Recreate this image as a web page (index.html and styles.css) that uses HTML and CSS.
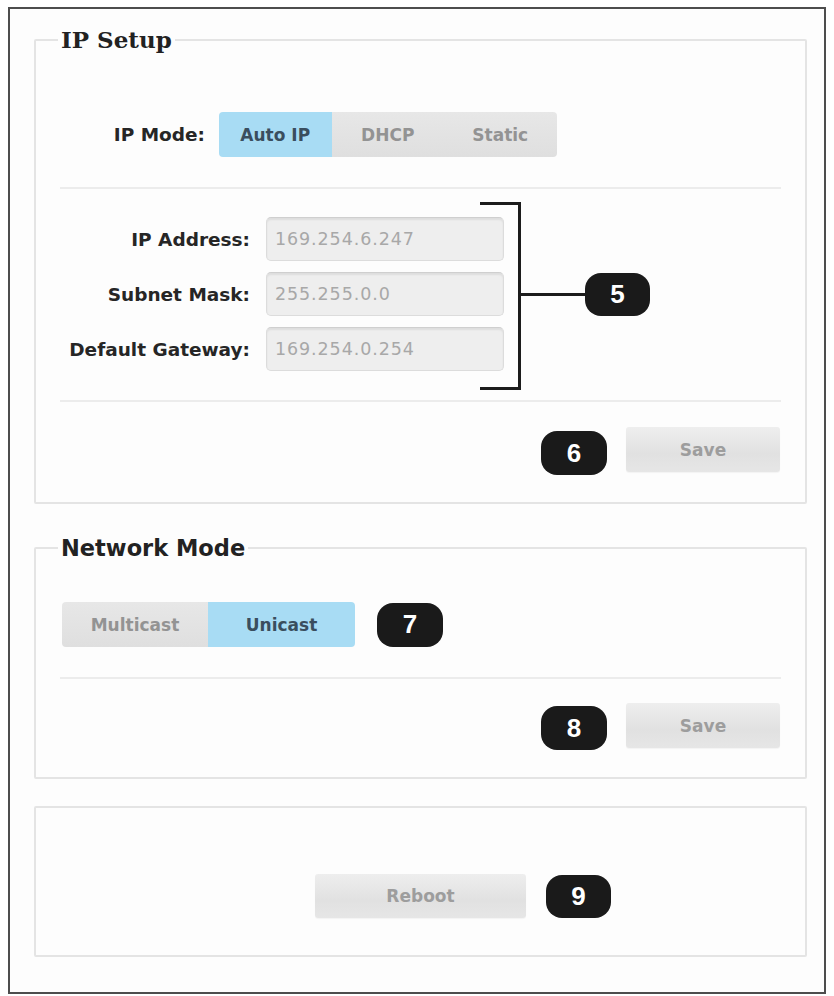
FILE: index.html
```html
<!DOCTYPE html>
<html lang="en">
<head>
<meta charset="utf-8">
<title>Network Settings</title>
<link rel="stylesheet" href="styles.css">
</head>
<body>
<div class="frame">

  <fieldset class="panel">
    <legend class="legend legend-serif">IP Setup</legend>
    <div class="mode-row mode-row-ip">
      <span class="mode-label">IP Mode:</span>
      <div class="segmented">
        <button class="seg seg-ip active">Auto IP</button>
        <button class="seg seg-ip">DHCP</button>
        <button class="seg seg-ip">Static</button>
      </div>
    </div>
    <div class="rule rule-after-mode"></div>
    <div class="address-block">
      <div class="fields">
        <label class="field-label">IP Address:</label>
        <input class="field-input" value="169.254.6.247" readonly>
        <label class="field-label">Subnet Mask:</label>
        <input class="field-input" value="255.255.0.0" readonly>
        <label class="field-label">Default Gateway:</label>
        <input class="field-input" value="169.254.0.254" readonly>
      </div>
      <div class="bracket"></div>
      <div class="connector"></div>
      <span class="badge">5</span>
    </div>
    <div class="rule"></div>
    <div class="action-row">
      <span class="badge badge-low">6</span>
      <button class="btn btn-save">Save</button>
    </div>
  </fieldset>

  <fieldset class="panel panel-network">
    <legend class="legend legend-sans">Network Mode</legend>
    <div class="mode-row mode-row-net">
      <div class="segmented">
        <button class="seg seg-net">Multicast</button>
        <button class="seg seg-net seg-wide active">Unicast</button>
      </div>
      <span class="badge badge-side">7</span>
    </div>
    <div class="rule rule-after-net"></div>
    <div class="action-row action-row-net">
      <span class="badge badge-low">8</span>
      <button class="btn btn-save">Save</button>
    </div>
  </fieldset>

  <div class="panel-plain">
    <div class="reboot-row">
      <button class="btn btn-reboot">Reboot</button>
      <span class="badge badge-reboot">9</span>
    </div>
  </div>

</div>
</body>
</html>
```

FILE: styles.css
```css
html, body {
  margin: 0;
  padding: 0;
  background: #ffffff;
}

body {
  font-family: "DejaVu Sans", Verdana, sans-serif;
  color: #333333;
}

/* outer page frame */
.frame {
  box-sizing: border-box;
  width: 818px;
  height: 987px;
  margin: 7px 0 0 8px;
  padding-top: 17px;
  border: 2px solid #4d4d4d;
  background: #fdfdfd;
}

/* grouped settings boxes */
.panel {
  box-sizing: border-box;
  width: 773px;
  min-width: 0;
  margin: 0 0 0 24px;
  padding: 0;
  border: 2px solid #e4e4e4;
  border-radius: 2px;
}

.panel-network {
  margin-top: 30px;
}

.legend {
  margin-left: 22px;
  padding: 0 3px;
  line-height: 28px;
  color: #222222;
}

.legend-serif {
  font-family: "DejaVu Serif", Georgia, serif;
  font-weight: bold;
  font-size: 23px;
}

.legend-sans {
  font-family: "DejaVu Sans", Verdana, sans-serif;
  font-weight: bold;
  font-size: 22.5px;
}

/* mode selector rows */
.mode-row {
  display: flex;
  align-items: center;
}

.mode-row-ip {
  padding: 58px 0 0 71px;
  gap: 14px;
}

.mode-row-net {
  padding: 40px 0 0 26px;
  gap: 22px;
}

.mode-label {
  width: 98px;
  text-align: right;
  font-weight: bold;
  font-size: 18.5px;
  color: #262626;
  white-space: nowrap;
}

.segmented {
  display: flex;
  border-radius: 4px;
  overflow: hidden;
}

.seg {
  height: 45px;
  margin: 0;
  padding: 0;
  border: 0;
  font-family: "DejaVu Sans", Verdana, sans-serif;
  font-weight: bold;
  font-size: 17px;
  color: #939393;
  background: linear-gradient(#e7e7e7, #dfdfdf);
}

.seg-ip {
  width: 112.5px;
}

.seg-net {
  width: 146px;
}

.seg-wide {
  width: 147px;
}

.seg.active {
  color: #3a4e5e;
  background: #a8dcf4;
}

/* thin separators */
.rule {
  height: 2px;
  margin: 0 24px;
  background: #ececec;
}

.rule-after-mode,
.rule-after-net {
  margin-top: 30px;
}

/* address fields with the bracket callout */
.address-block {
  display: flex;
  align-items: center;
  padding: 13px 0 10px 0;
}

.fields {
  align-self: flex-start;
  margin-top: 15px;
  display: grid;
  grid-template-columns: 214px 238px;
  grid-auto-rows: 44px;
  column-gap: 16px;
  row-gap: 11px;
  align-items: center;
}

.field-label {
  text-align: right;
  font-weight: bold;
  font-size: 18.5px;
  color: #262626;
  white-space: nowrap;
}

.field-input {
  box-sizing: border-box;
  width: 238px;
  height: 44px;
  margin: 0;
  padding: 0 0 0 8px;
  border: 1px solid #dcdcdc;
  border-top-color: #cfcfcf;
  border-radius: 5px;
  background: #eeeeee;
  box-shadow: inset 0 2px 2px rgba(0, 0, 0, 0.07);
  font-family: "DejaVu Sans", Verdana, sans-serif;
  font-size: 17.5px;
  letter-spacing: 0.9px;
  color: #a8a8a8;
  outline: none;
}

.bracket {
  box-sizing: border-box;
  width: 41px;
  height: 188px;
  margin-left: -24px;
  border-top: 3px solid #1c1c1c;
  border-right: 3px solid #1c1c1c;
  border-bottom: 3px solid #1c1c1c;
}

.connector {
  width: 64px;
  height: 3px;
  margin-top: -4px;
  background: #1c1c1c;
}

/* numbered callouts */
.badge {
  display: flex;
  align-items: center;
  justify-content: center;
  width: 66px;
  height: 44px;
  border-radius: 16px;
  background: #1a1a1a;
  color: #ffffff;
  font-family: "Liberation Sans", Arial, sans-serif;
  font-weight: bold;
  font-size: 26px;
  flex-shrink: 0;
}

.address-block .badge {
  margin-top: -4px;
  width: 65px;
  height: 43px;
}

.badge-low {
  margin-top: 4px;
}

/* save / reboot buttons */
.action-row {
  display: flex;
  justify-content: flex-end;
  align-items: flex-start;
  gap: 19px;
  padding: 25px 25px 27px 0;
}

.action-row-net {
  padding: 24px 25px 27px 0;
}

.action-row-net .badge-low {
  margin-top: 3px;
}

.btn {
  margin: 0;
  padding: 0;
  border: 0;
  border-radius: 3px;
  background: linear-gradient(#eeeeee, #e1e1e1 60%, #e6e6e6);
  box-shadow: 0 1px 1px rgba(0, 0, 0, 0.04);
  font-family: "DejaVu Sans", Verdana, sans-serif;
  font-weight: bold;
  font-size: 17px;
  color: #9d9d9d;
}

.btn-save {
  width: 154px;
  height: 45px;
}

.btn-reboot {
  grid-column: 2;
  width: 211px;
  height: 44px;
}

.panel-plain {
  box-sizing: border-box;
  width: 773px;
  margin: 27px 0 0 24px;
  padding: 66px 0 37px 0;
  border: 2px solid #e4e4e4;
  border-radius: 2px;
}

.reboot-row {
  display: grid;
  grid-template-columns: 1fr auto 1fr;
  align-items: center;
}

.badge-reboot {
  grid-column: 3;
  justify-self: start;
  margin-left: 20px;
  width: 65px;
  height: 43px;
}
```
